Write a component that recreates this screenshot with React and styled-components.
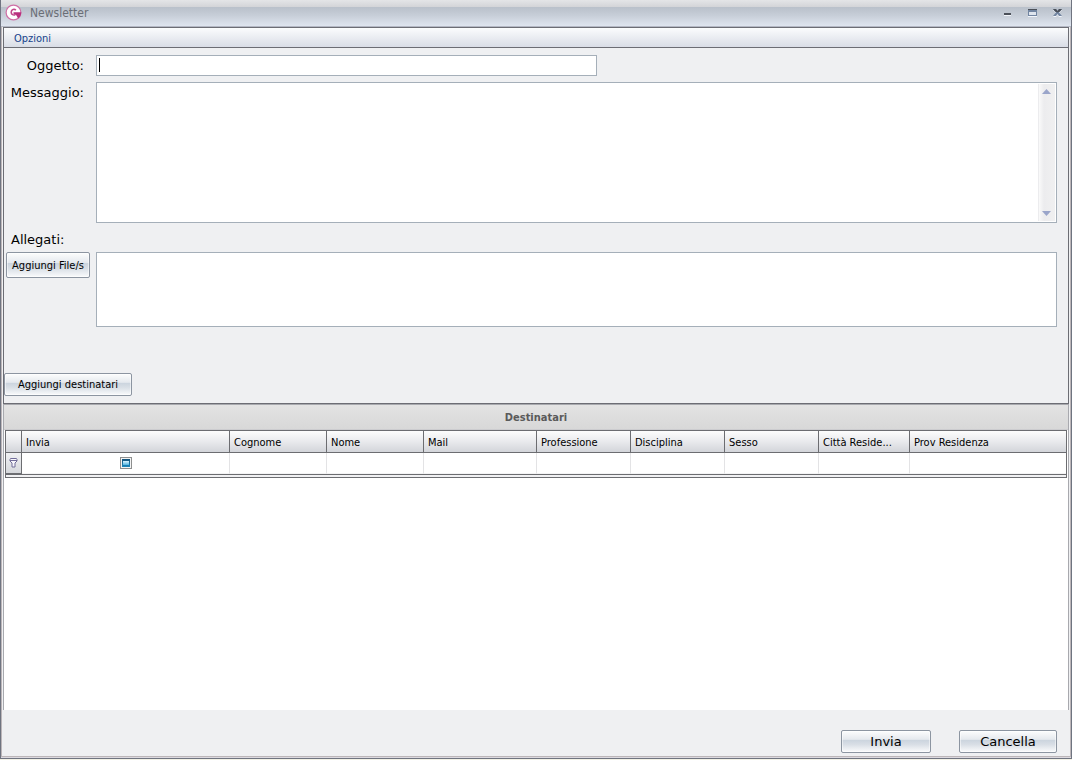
import React from "react";
import styled, { createGlobalStyle, css } from "styled-components";

const wide = '"DejaVu Sans", Verdana, sans-serif';
const narrow = '"DejaVu Sans Condensed", "DejaVu Sans", Tahoma, sans-serif';

const GlobalStyle = createGlobalStyle`
  * { box-sizing: border-box; }
  body { margin: 0; background: #f3f2e6; font-family: ${wide}; font-size: 13px; color: #000; }
  button, input, textarea { font: inherit; color: inherit; margin: 0; }
`;

const Page = styled.div`
  display: flex;
  flex-direction: column;
  min-height: 100vh;
  padding-bottom: 1px;
`;

const Window = styled.main`
  flex: 1;
  display: flex;
  flex-direction: column;
  background: #dcd9df;
  border: solid #6f7480;
  border-width: 0 1px 1px;
`;

const TitleBar = styled.header`
  display: flex;
  align-items: center;
  height: 27px;
  padding: 0 5px 1px 4px;
  border-bottom: 1px solid #b4b8c4;
  background: linear-gradient(#e4e5e7 0, #d3d4d8 7px, #b9c0ca 7px, #c6cdd7 15px, #dfe5ef 26px);
`;

const Title = styled.h1`
  flex: 1;
  margin: 0 0 0 8px;
  font: 12px/16px ${narrow};
  color: #6a6e76;
`;

const WindowControls = styled.div`
  display: flex;
  gap: 9px;
`;

const ControlButton = styled.button`
  width: 16px;
  height: 16px;
  padding: 0;
  border: 0;
  background: none;
  svg { display: block; }
`;

const Frame = styled.div`
  flex: 1;
  display: flex;
  flex-direction: column;
  border: solid #bcb6b9;
  border-width: 0 1px 1px;
  margin-bottom: 1px;
  background: #eff0f2;
`;

const Panel = styled.section`
  margin: 0 1px;
  border: 1px solid #6c6d74;
`;

const MenuBar = styled.nav`
  height: 20px;
  padding: 0 4px;
  border-bottom: 1px solid #6c6d74;
  background: linear-gradient(#fbfcfd, #d9dde6);
`;

const MenuItem = styled.button`
  height: 19px;
  padding: 2px 6px 0;
  border: 0;
  background: none;
  font: 11px/16px ${narrow};
  color: #15428b;
`;

const Form = styled.form`
  display: grid;
  grid-template-columns: 86px minmax(0, 1fr);
  column-gap: 6px;
  padding: 7px 11px 7px 0;
`;

const Label = styled.label`
  padding: 2px 6px 0 0;
  line-height: 18px;
  text-align: right;
`;

const AttachLabel = styled.h2`
  grid-column: 1 / -1;
  margin: 8px 0 3px;
  padding-left: 7px;
  font: 13px/18px ${wide};
`;

const fieldFrame = css`
  border: 1px solid #a5afb9;
  background-color: #fff;
`;

const SubjectInput = styled.input`
  ${fieldFrame}
  width: 501px;
  max-width: 100%;
  height: 21px;
  margin-bottom: 6px;
  padding: 0 4px;
  outline: 0;
  background-image: linear-gradient(#000, #000);
  background-repeat: no-repeat;
  background-size: 1px 14px;
  background-position: 2px 2px;
`;

const MessageBox = styled.div`
  ${fieldFrame}
  display: flex;
  height: 141px;
  padding: 1px;
`;

const MessageInput = styled.textarea`
  flex: 1;
  min-width: 0;
  padding: 2px;
  border: 0;
  outline: 0;
  resize: none;
  overflow: hidden;
  background: none;
`;

const ScrollTrack = styled.div`
  display: flex;
  flex-direction: column;
  justify-content: space-between;
  align-items: center;
  width: 17px;
  padding: 5px 1px 5px 0;
  border-left: 1px solid #ececee;
  background: linear-gradient(90deg, #fafafa, #ececee 5px, #f0f0f1);
`;

const FileList = styled.div`
  ${fieldFrame}
  height: 75px;
`;

const Button = styled.button`
  height: ${(p) => p.$height || 23}px;
  min-width: ${(p) => p.$width}px;
  padding: 1px 4px 0;
  border: 1px solid #8c95a1;
  border-radius: 2px;
  background: linear-gradient(#fcfdfd 0, #e5e9ee 40%, #cbd4de 43%, #d9dfe6 65%, #fafbfc 100%);
  box-shadow: inset 0 0 0 1px rgba(255, 255, 255, 0.5);
  font: ${(p) => (p.$large ? `13px/18px ${wide}` : `11px/16px ${narrow}`)};
  white-space: nowrap;
`;

const FileCell = styled.div`
  padding-left: 2px;
`;

const RecipientsAction = styled.div`
  grid-column: 1 / -1;
  padding-top: 46px;
`;

const Recipients = styled.section`
  flex: 1;
  margin: 0 1px;
  border: solid #a8a9ae;
  border-width: 1px 1px 0;
  background: #fff;
`;

const Caption = styled.h2`
  height: 25px;
  margin: 0;
  border-bottom: 1px solid #cccccf;
  background: linear-gradient(#e3e3e3, #d8d8d8);
  font: bold 11px/26px "DejaVu Sans Condensed", "DejaVu Sans", sans-serif;
  text-align: center;
  color: #5a5a5a;
`;

const TableWrap = styled.div`
  margin: 0 1px;
  border: 1px solid #6c6d71;
  border-bottom: 0;
`;

const Table = styled.table`
  width: 100%;
  table-layout: fixed;
  border-collapse: separate;
  border-spacing: 0;
  font: 11px/16px ${narrow};
`;

const HeadCell = styled.th`
  height: 22px;
  padding: 2px 4px 0;
  border-right: 1px solid #6c6d71;
  border-bottom: 1px solid #6c6d71;
  background: linear-gradient(#fdfdfd, #e9eaed 50%, #d3d5da);
  font-weight: normal;
  text-align: left;
  white-space: nowrap;
  overflow: hidden;
  &:last-child { border-right: 0; }
`;

const FilterCell = styled.td`
  height: 21px;
  padding: 0;
  border-right: 1px solid ${(p) => (p.$head ? "#6c6d71" : "#e3e3e5")};
  border-bottom: 1px solid ${(p) => (p.$head ? "#6c6d71" : "#f4f4f5")};
  background: ${(p) => (p.$head ? "linear-gradient(#f0f1f3, #d6d8dc)" : "#fff")};
  text-align: center;
  line-height: 0;
  &:last-child { border-right: 0; }
`;

const FilterInput = styled.input`
  display: block;
  width: 100%;
  height: 20px;
  padding: 0 4px;
  border: 0;
  outline: 0;
  background: none;
`;

const TriState = styled.input`
  appearance: none;
  width: 12px;
  height: 12px;
  vertical-align: middle;
  border: 1px solid #8e8f8f;
  background:
    linear-gradient(#d9f4ff, #52b5e2) center / 6px 4px no-repeat,
    linear-gradient(#14527a, #1c88bd) center / 8px 8px no-repeat,
    #f4f4f4;
`;

const SplitLine = styled.div`
  height: 4px;
  margin: 0 1px;
  border: 1px solid #6c6d71;
  background: #f1f1f3;
`;

const Footer = styled.footer`
  display: flex;
  justify-content: flex-end;
  gap: 28px;
  padding: 20px 13px 3px;
`;

const columns = [
  ["Invia", 208],
  ["Cognome", 97],
  ["Nome", 97],
  ["Mail", 113],
  ["Professione", 94],
  ["Disciplina", 94],
  ["Sesso", 94],
  ["Città Reside...", 91],
  ["Prov Residenza", null],
];

function AppLogo() {
  return (
    <svg width="17" height="17" viewBox="0 0 17 17" aria-hidden="true">
      <circle cx="8.5" cy="8.5" r="7.4" fill="#fff" stroke="#cf6fa6" strokeWidth="1.2" />
      <path d="M10.800 6.300C9.500 4.500 6.200 5.200 6.200 8.200c0 2.400 2.200 3.300 4 2.600" fill="none" stroke="#c2468c" strokeWidth="1.600" />
      <path d="M8.500 8.200h7.800c0 1.500-.5 2.900-1.300 4.200l-1.800 2-1.900-3.200-2.800-1.400z" fill="#b92f7e" />
    </svg>
  );
}

function Arrow({ down }) {
  return (
    <svg width="9" height="5" viewBox="0 0 9 5" aria-hidden="true">
      <path d={down ? "M0 0h9L4.5 5z" : "M0 5h9L4.5 0z"} fill="#9aa5ca" />
    </svg>
  );
}

function FilterIcon() {
  return (
    <svg width="9" height="10" viewBox="0 0 9 10" aria-hidden="true">
      <path d="M1.500.5h6l.5 1v1.500l-2 2v4h-3v-4l-2-2V1.500zM1 2.500h7" fill="#f7f6fc" stroke="#716c98" />
    </svg>
  );
}

const controlIcons = [
  ["Riduci a icona", <><path d="M4 8h7v2H4z" fill="#4b5059" /><path d="M4 10h7v1H4z" fill="#f2f5fa" /></>],
  ["Ingrandisci", <>
    <path d="M3 11h9v1H3z" fill="#f2f5fa" />
    <path d="M3 5h9v6H3z" fill="#7285a1" />
    <path d="M3 4h9v1H3z" fill="#4b5059" />
    <path d="M4 7h7v3H4z" fill="#dfe5ee" />
  </>],
  ["Chiudi", <>
    <path d="M3 5h3l1.500 2L9 5h3L9 8.500l3 3.500H9l-1.500-2L6 12H3l3-3.500z" fill="#f2f5fa" />
    <path d="M3 4h3l1.500 2L9 4h3L9 7.500l3 3.500H9L7.500 9 6 11H3l3-3.500z" fill="#7285a1" />
    <path d="M3 4h3l1.500 2L9 4h3l-2 2.500-2.500 1L5 6.500z" fill="#4b5059" />
  </>],
];

export default function App() {
  return (
    <Page>
      <GlobalStyle />
      <Window>
        <TitleBar>
          <AppLogo />
          <Title>Newsletter</Title>
          <WindowControls>
            {controlIcons.map(([name, icon]) => (
              <ControlButton key={name} type="button" aria-label={name}>
                <svg width="16" height="16" viewBox="0 0 16 16">{icon}</svg>
              </ControlButton>
            ))}
          </WindowControls>
        </TitleBar>
        <Frame>
          <Panel>
            <MenuBar>
              <MenuItem type="button">Opzioni</MenuItem>
            </MenuBar>
            <Form onSubmit={(e) => e.preventDefault()}>
              <Label htmlFor="subject">Oggetto:</Label>
              <SubjectInput id="subject" type="text" />
              <Label htmlFor="message">Messaggio:</Label>
              <MessageBox>
                <MessageInput id="message" />
                <ScrollTrack>
                  <Arrow />
                  <Arrow down />
                </ScrollTrack>
              </MessageBox>
              <AttachLabel id="attachments">Allegati:</AttachLabel>
              <FileCell>
                <Button type="button" $width={84} $height={26}>Aggiungi File/s</Button>
              </FileCell>
              <FileList role="list" aria-labelledby="attachments" />
              <RecipientsAction>
                <Button type="button" $width={128}>Aggiungi destinatari</Button>
              </RecipientsAction>
            </Form>
          </Panel>
          <Recipients>
            <Caption>Destinatari</Caption>
            <TableWrap>
              <Table>
                <colgroup>
                  <col width="16" />
                  {columns.map(([name, width]) => (
                    <col key={name} width={width || undefined} />
                  ))}
                </colgroup>
                <thead>
                  <tr>
                    <HeadCell />
                    {columns.map(([name]) => (
                      <HeadCell key={name} scope="col">{name}</HeadCell>
                    ))}
                  </tr>
                </thead>
                <tbody>
                  <tr>
                    <FilterCell $head><FilterIcon /></FilterCell>
                    {columns.map(([name], i) => (
                      <FilterCell key={name}>
                        {i === 0 ? (
                          <TriState type="checkbox" aria-label="Filtra Invia" />
                        ) : (
                          <FilterInput type="text" aria-label={`Filtra ${name}`} />
                        )}
                      </FilterCell>
                    ))}
                  </tr>
                </tbody>
              </Table>
            </TableWrap>
            <SplitLine />
          </Recipients>
          <Footer>
            <Button type="button" $large $width={90}>Invia</Button>
            <Button type="button" $large $width={98}>Cancella</Button>
          </Footer>
        </Frame>
      </Window>
    </Page>
  );
}
